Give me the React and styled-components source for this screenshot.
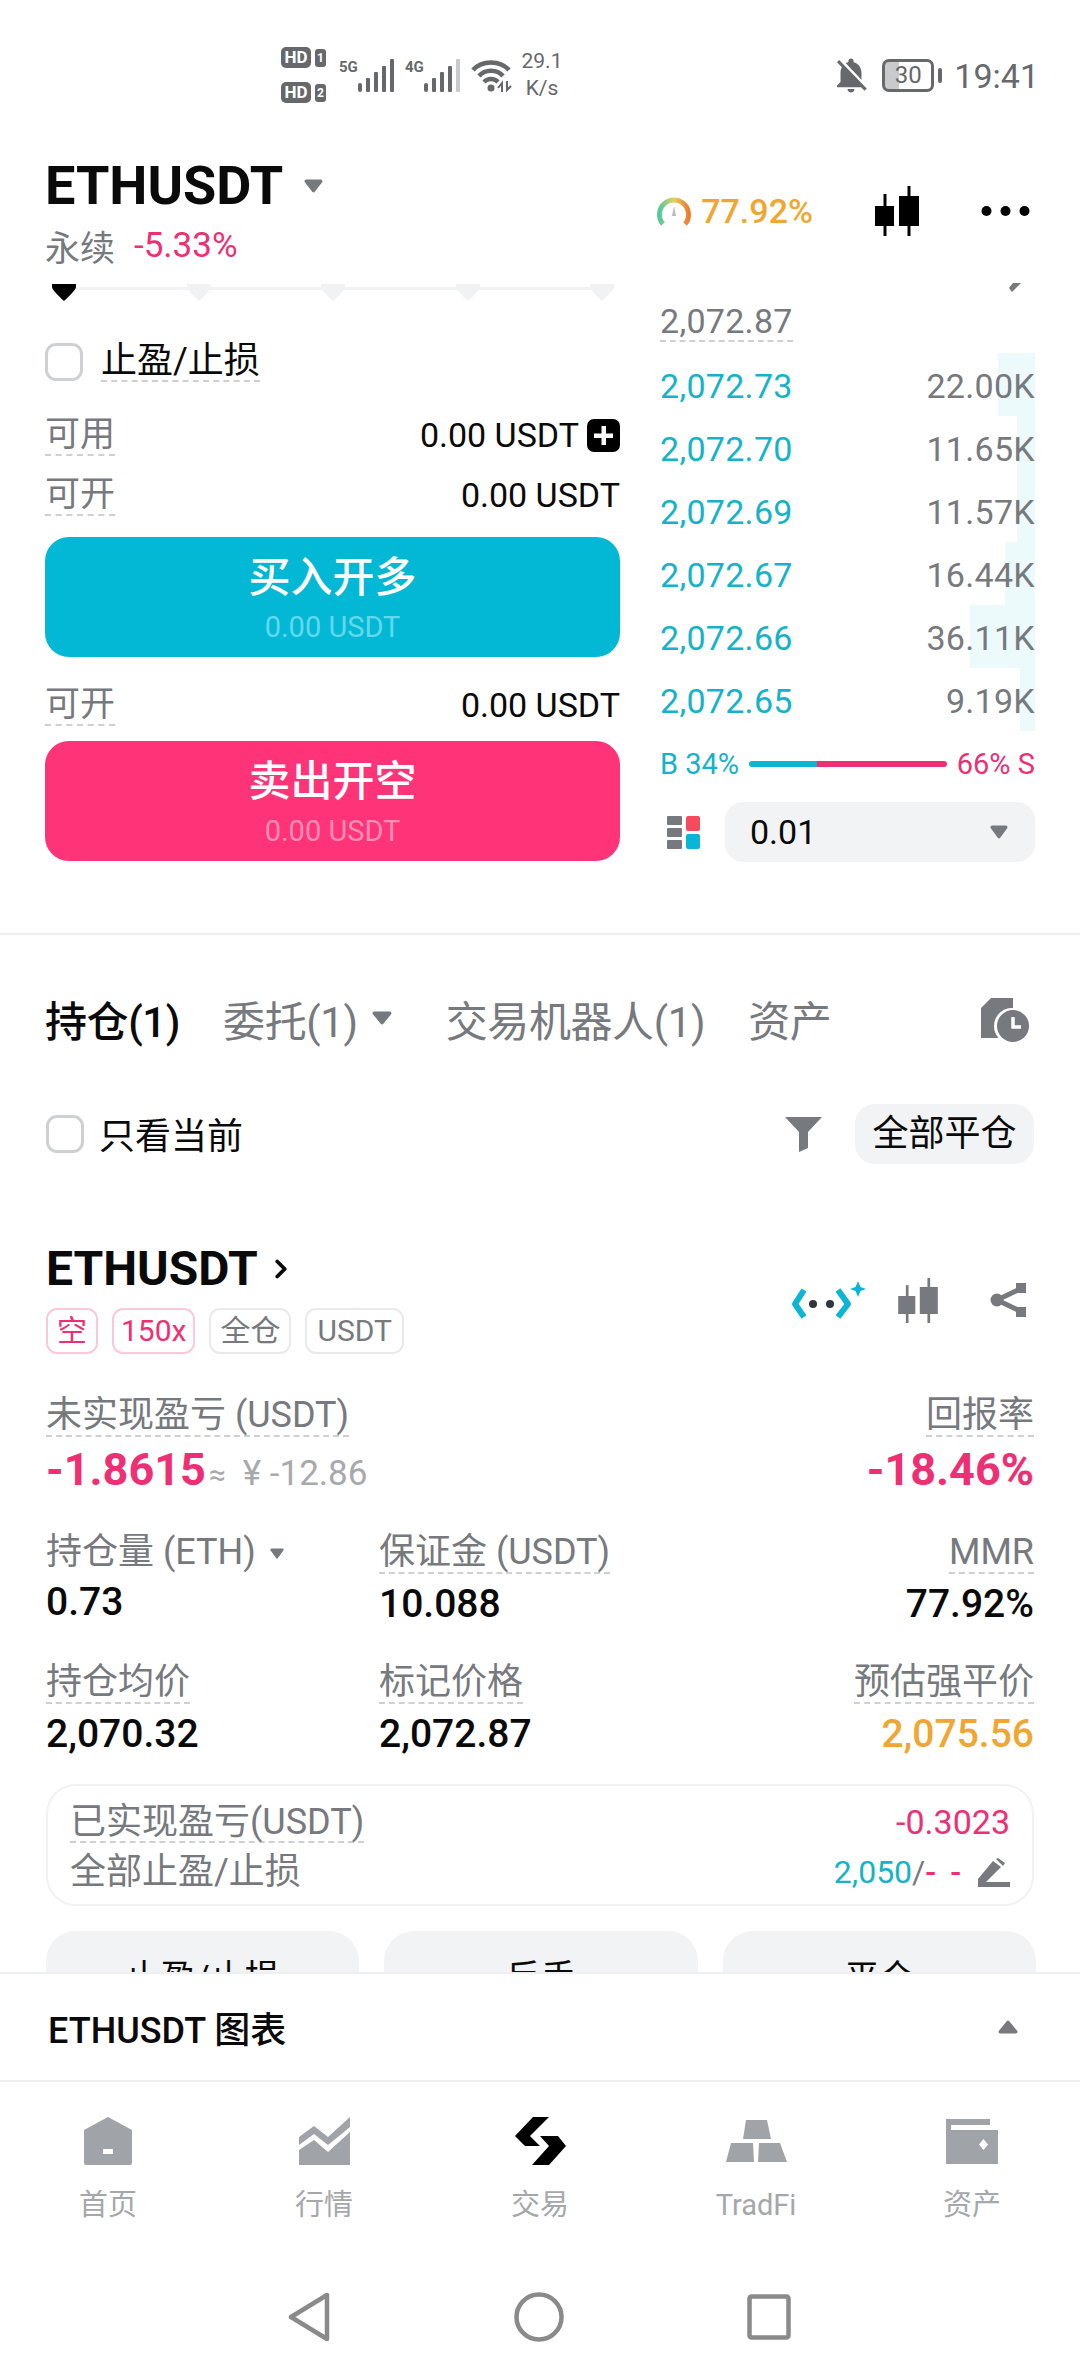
// Imports
import styled, {createGlobalStyle} from 'styled-components'
import {MdNotificationsOff} from 'react-icons/md'
import {LuChevronRight} from 'react-icons/lu'


// Styles
const pink = '#ee2f74'
const cyan = '#14b3c9'
const gray = '#76797e'

const GlobalStyle = createGlobalStyle`
    * { box-sizing:border-box; }
    html, body { margin:0; padding:0; background:#fff; }
    body { font-family:Roboto, "Noto Sans CJK SC", sans-serif; color:#0a0a0a; }
`
const Page = styled.div`
    width:1080px;
    height:2376px;
    display:flex;
    flex-direction:column;
    overflow:hidden;
    background:#fff;
`

// status bar
const StatusBar = styled.div`
    height:120px;
    flex:none;
    padding:30px 41px 0 281px;
    display:flex;
    align-items:center;
    color:#66686b;
`
const HdColumn = styled.div`
    width:46px;
    display:flex;
    flex-direction:column;
    gap:14px;
`
const HdLine = styled.div`
    display:flex;
    align-items:center;
    gap:4px;
`
const HdBadge = styled.span`
    width:30px;
    height:21px;
    border-radius:5px;
    background:#66686b;
    color:#fff;
    font-size:17px;
    font-weight:700;
    line-height:21px;
    text-align:center;
`
const SimBadge = styled.span`
    width:11px;
    height:18px;
    border-radius:3px;
    background:#66686b;
    color:#fff;
    font-size:12px;
    font-weight:700;
    line-height:18px;
    text-align:center;
`
const NetGroup = styled.div`
    display:flex;
    align-items:flex-start;
    margin-left:${({$ml}) => $ml}px;
`
const NetLabel = styled.span`
    font-size:15px;
    font-weight:700;
    line-height:16px;
    width:19px;
`
const Speed = styled.div`
    margin-left:7px;
    width:46px;
    font-size:21px;
    line-height:27px;
    text-align:center;
`
const StatusRight = styled.div`
    margin-left:auto;
    display:flex;
    align-items:center;
`
const Battery = styled.div`
    width:52px;
    height:33px;
    border:3px solid #66686b;
    border-radius:7px;
    position:relative;
    overflow:hidden;
    font-size:24px;
    line-height:27px;
    text-align:center;
    margin-left:10px;
    background:linear-gradient(90deg, #c9cacc 0, #c9cacc 30%, #fff 30%);
`
const BatteryNub = styled.span`
    width:4px;
    height:15px;
    border-radius:2px;
    background:#66686b;
    margin:0 12px 0 4px;
`
const Clock = styled.span`
    font-size:34px;
    line-height:40px;
    position:relative;
    top:1px;
`

// header
const Header = styled.div`
    height:163px;
    flex:none;
    padding:41px 50px 0 45px;
    display:flex;
    justify-content:space-between;
`
const TitleLine = styled.div`
    display:flex;
    align-items:center;
    height:50px;
`
const Symbol = styled.span`
    font-size:54px;
    font-weight:700;
    line-height:50px;
`
const SubLine = styled.div`
    display:flex;
    align-items:center;
    height:40px;
    margin-top:14px;
    gap:19px;
`
const Perp = styled.span`
    font-size:35px;
    color:${gray};
`
const Change = styled.span`
    font-size:35px;
    color:${pink};
`
const HeaderTools = styled.div`
    height:50px;
    margin-top:25px;
    display:flex;
    align-items:center;
`
const MmrText = styled.span`
    font-size:34px;
    font-weight:500;
    color:#f0a732;
    margin:0 62px 0 9px;
`

// scrolled area
const Main = styled.div`
    flex:1;
    min-height:0;
    overflow:hidden;
`
const TradePanel = styled.div`
    display:flex;
    gap:40px;
    padding:0 45px;
`
const LeftColumn = styled.div`
    width:575px;
    flex:none;
`
const RightColumn = styled.div`
    width:375px;
    flex:none;
`
const Slider = styled.div`
    position:relative;
    height:20px;
    padding:1px 6px 0 7px;
    display:flex;
    justify-content:space-between;
    align-items:flex-start;
`
const SliderTrack = styled.div`
    position:absolute;
    left:18px;
    right:18px;
    top:4px;
    height:3px;
    background:#f1f2f4;
`
const ThumbIcon = styled.svg`
    position:relative;
    display:block;
`
const TpRow = styled.div`
    margin-top:40px;
    height:38px;
    display:flex;
    align-items:center;
    gap:18px;
`
const CheckBox = styled.span`
    width:38px;
    height:38px;
    flex:none;
    border:3px solid #cfd0d2;
    border-radius:11px;
    background:#fff;
`
const DashLabel = styled.span`
    display:inline-block;
    font-size:${({$size}) => $size || 35}px;
    line-height:${({$lh}) => $lh || 38}px;
    color:${({$dark}) => $dark ? '#0a0a0a' : gray};
    border-bottom:2px dashed #cfd0d2;
    white-space:nowrap;
`
const InfoRow = styled.div`
    display:flex;
    justify-content:space-between;
    align-items:flex-start;
    margin-top:${({$mt}) => $mt}px;
`
const InfoValue = styled.span`
    display:flex;
    align-items:center;
    font-size:34px;
    line-height:38px;
    gap:8px;
`
const PlusBox = styled.span`
    width:33px;
    height:33px;
    border-radius:7px;
    background:#000;
    display:flex;
    align-items:center;
    justify-content:center;
`
const ActionButton = styled.div`
    height:120px;
    margin-top:${({$mt}) => $mt}px;
    padding-top:16px;
    border-radius:24px;
    background:${({$bg}) => $bg};
    color:#fff;
    text-align:center;
`
const ActionTitle = styled.div`
    font-size:42px;
    font-weight:500;
    line-height:50px;
`
const ActionSub = styled.div`
    margin-top:4px;
    font-size:29px;
    line-height:40px;
    color:${({$color}) => $color};
`
const TopScrap = styled.div`
    height:19px;
    display:flex;
    justify-content:flex-end;
    padding-right:14px;
`
const MarkPrice = styled.span`
    display:inline-block;
    font-size:34px;
    line-height:38px;
    color:${gray};
    letter-spacing:0.3px;
    border-bottom:2px dashed #cfd0d2;
`
const Book = styled.div`
    margin-top:11px;
`
const BookRow = styled.div`
    position:relative;
    height:63px;
    padding-top:3px;
    display:flex;
    align-items:center;
    justify-content:space-between;
    font-size:34px;
    letter-spacing:0.3px;
`
const DepthBar = styled.span`
    position:absolute;
    top:0;
    right:0;
    bottom:0;
    width:${({$w}) => $w}px;
    background:#edfafc;
`
const BookPrice = styled.span`
    position:relative;
    color:${cyan};
`
const BookAmount = styled.span`
    position:relative;
    color:${gray};
`
const RatioRow = styled.div`
    margin-top:17px;
    height:32px;
    display:flex;
    align-items:center;
    justify-content:space-between;
    font-size:29px;
`
const RatioText = styled.span`
    color:${({$color}) => $color};
`
const RatioBar = styled.div`
    width:198px;
    height:6px;
    border-radius:3px;
    display:flex;
    overflow:hidden;
`
const RatioPart = styled.span`
    width:${({$w}) => $w}px;
    background:${({$bg}) => $bg};
`
const StepRow = styled.div`
    margin-top:22px;
    display:flex;
    align-items:center;
    padding-left:7px;
`
const StepSelect = styled.div`
    margin-left:25px;
    width:310px;
    height:60px;
    padding:0 27px 0 25px;
    border-radius:18px;
    background:#f2f3f5;
    display:flex;
    align-items:center;
    justify-content:space-between;
    font-size:34px;
`
const Divider = styled.div`
    margin-top:71px;
    height:2px;
    background:#eeeff1;
`
const Tabs = styled.div`
    margin-top:53px;
    height:60px;
    padding:0 50px 0 45px;
    display:flex;
    align-items:center;
    gap:43px;
`
const Tab = styled.span`
    display:flex;
    align-items:center;
    gap:14px;
    font-size:42px;
    letter-spacing:-0.4px;
    font-weight:${({$active}) => $active ? 500 : 400};
    color:${({$active}) => $active ? '#0a0a0a' : gray};
    margin-right:${({$mr}) => $mr || 0}px;
`
const TabEnd = styled.span`
    margin-left:auto;
    display:flex;
    position:relative;
    top:2px;
`
const FilterRow = styled.div`
    margin-top:56px;
    height:60px;
    padding:0 46px;
    display:flex;
    align-items:center;
`
const FilterLabel = styled.span`
    margin:0 0 3px 15px;
    font-size:36px;
`
const FilterEnd = styled.div`
    margin-left:auto;
    display:flex;
    align-items:center;
    gap:33px;
`
const CloseAll = styled.span`
    width:179px;
    height:60px;
    border-radius:20px;
    background:#f2f3f5;
    font-size:36px;
    line-height:60px;
    text-align:center;
`
const Position = styled.div`
    margin-top:82px;
    padding:0 46px;
`
const PositionHead = styled.div`
    display:flex;
    align-items:center;
    justify-content:space-between;
`
const PositionName = styled.div`
    display:flex;
    align-items:center;
    gap:8px;
    font-size:48px;
    font-weight:700;
    line-height:46px;
`
const Tags = styled.div`
    margin-top:16px;
    display:flex;
    gap:14px;
`
const Tag = styled.span`
    height:46px;
    padding:0 ${({$pad}) => $pad}px;
    border:2px solid ${({$pink}) => $pink ? '#fbc9da' : '#e9eaec'};
    border-radius:11px;
    font-size:30px;
    line-height:42px;
    color:${({$pink}) => $pink ? pink : gray};
`
const HeadIcons = styled.div`
    display:flex;
    align-items:center;
    margin-right:8px;
`
const PnlRow = styled.div`
    margin-top:41px;
    display:flex;
    justify-content:space-between;
`
const Cell = styled.div`
    display:flex;
    flex-direction:column;
    align-items:${({$right}) => $right ? 'flex-end' : 'flex-start'};
`
const LabelLine = styled.span`
    display:flex;
    align-items:flex-start;
    gap:14px;
`
const PnlValue = styled.div`
    margin-top:8px;
    display:flex;
    align-items:baseline;
    font-size:45px;
    font-weight:700;
    line-height:50px;
    color:${pink};
`
const Approx = styled.span`
    margin-left:3px;
    font-size:30px;
    font-weight:400;
    color:#a7a9ac;
`
const Fiat = styled.span`
    margin-left:17px;
    font-size:35px;
    font-weight:400;
    color:#a7a9ac;
`
const MetricGrid = styled.div`
    margin-top:${({$mt}) => $mt}px;
    display:grid;
    grid-template-columns:333px 1fr auto;
`
const MetricValue = styled.div`
    margin-top:7px;
    font-size:39px;
    font-weight:500;
    line-height:46px;
    color:${({$color}) => $color || '#0a0a0a'};
`
const Realized = styled.div`
    margin-top:27px;
    height:122px;
    padding:17px 22px 0 22px;
    border:2px solid #f1f2f4;
    border-radius:30px;
`
const RealizedRow = styled.div`
    display:flex;
    align-items:flex-start;
    justify-content:space-between;
    margin-top:${({$mt}) => $mt || 0}px;
`
const PlainLabel = styled.span`
    font-size:${({$size}) => $size || 36}px;
    line-height:${({$lh}) => $lh || 38}px;
    color:${gray};
`
const SmallValue = styled.span`
    display:flex;
    align-items:center;
    font-size:${({$size}) => $size || 34}px;
    line-height:38px;
    color:${({$color}) => $color || pink};
`
const Slash = styled.span`
    color:${gray};
`
const Dashes = styled.span`
    color:${pink};
    margin-right:14px;
    font-weight:500;
    letter-spacing:3px;
`
const CaretSlot = styled.span`
    margin-top:12px;
`
const ActionGrid = styled.div`
    margin-top:25px;
    display:grid;
    grid-template-columns:313px 314px 313px;
    gap:25px;
`
const GhostButton = styled.div`
    height:96px;
    border-radius:30px;
    background:#f2f3f5;
    font-size:35px;
    line-height:96px;
    text-align:center;
`

// bottom
const ChartBar = styled.div`
    height:108px;
    flex:none;
    border-top:2px solid #eeeff1;
    padding:0 62px 0 48px;
    display:flex;
    align-items:center;
    justify-content:space-between;
    font-size:36px;
    font-weight:500;
`
const BottomNav = styled.div`
    height:172px;
    flex:none;
    border-top:2px solid #eeeff1;
    display:grid;
    grid-template-columns:repeat(5, 216px);
`
const NavItem = styled.div`
    padding-top:35px;
    display:flex;
    flex-direction:column;
    align-items:center;
`
const NavIcon = styled.div`
    height:48px;
    display:flex;
    align-items:center;
    justify-content:center;
`
const NavLabel = styled.span`
    margin-top:22px;
    font-size:29px;
    line-height:36px;
    color:#a5a7aa;
`
const SystemNav = styled.div`
    height:124px;
    flex:none;
    padding:5px 289px 0 288px;
    display:flex;
    align-items:center;
    justify-content:space-between;
`
const TitleGap = styled.span`
    width:21px;
`
const Gap = styled.span`
    width:${({$w}) => $w}px;
`


// Icons
const Caret = ({w = 18, h = 13, up, color = gray}) => (
    <svg width={w} height={h} viewBox='0 0 18 13' preserveAspectRatio='none'>
        <path d={up ? 'M9 2 L16 11 H2 Z' : 'M2 2 H16 L9 11 Z'} fill={color} stroke={color} strokeWidth='3' strokeLinejoin='round' />
    </svg>
)

const Thumb = ({color}) => (
    <ThumbIcon width='24' height='17' viewBox='0 0 24 17'>
        <path d='M0 0 H24 V3 C24 6 14 15 12 17 C10 15 0 6 0 3 Z' fill={color} />
    </ThumbIcon>
)

const SignalBars = ({last = '#66686b'}) => (
    <svg width='36' height='33' viewBox='0 0 36 33'>
        <rect x='0' y='24' width='4' height='9' rx='2' fill='#66686b' />
        <rect x='8' y='19' width='4' height='14' rx='1' fill='#66686b' />
        <rect x='16' y='13' width='4' height='20' rx='1' fill='#66686b' />
        <rect x='24' y='7' width='4' height='26' rx='1' fill='#66686b' />
        <rect x='32' y='0' width='4' height='33' rx='1' fill={last} />
    </svg>
)

const Wifi = () => (
    <svg width='41' height='33' viewBox='0 0 41 33' fill='none' stroke='#66686b' strokeWidth='4.5'>
        <path d='M2 11 C11 1 29 1 38 11' />
        <path d='M8 17 C14 10 26 10 32 17' />
        <path d='M13 23 C17 19 23 19 27 23' />
        <circle cx='20' cy='29' r='3.5' fill='#66686b' stroke='none' />
        <path d='M31 33 V24 L27 29 M36 22 V31 L40 27' strokeWidth='2' />
    </svg>
)

const Gauge = () => (
    <svg width='36' height='30' viewBox='0 0 36 30' fill='none'>
        <defs>
            <linearGradient id='gaugeFill' x1='0' x2='1' y1='0' y2='0'>
                <stop offset='0' stopColor='#54c9a0' />
                <stop offset='0.5' stopColor='#e6d25a' />
                <stop offset='1' stopColor='#ef7d2e' />
            </linearGradient>
        </defs>
        <path d='M7 28 A14.5 14.5 0 1 1 29 28' stroke='url(#gaugeFill)' strokeWidth='5' />
        <path d='M18 10 L20 20 H16 Z' fill='#b9bbbe' />
    </svg>
)

const Candles = ({w = 44, h = 50, color = '#000'}) => (
    <svg width={w} height={h} viewBox='0 0 44 50' fill={color}>
        <rect x='0' y='20' width='19' height='20' />
        <rect x='8.5' y='8' width='3' height='42' />
        <rect x='24' y='10' width='20' height='30' />
        <rect x='32.5' y='0' width='3' height='50' />
    </svg>
)

const Dots = () => (
    <svg width='49' height='12' viewBox='0 0 49 12' fill='#000'>
        <circle cx='5.5' cy='6' r='5' />
        <circle cx='24.5' cy='6' r='5' />
        <circle cx='43.5' cy='6' r='5' />
    </svg>
)

const Plus = () => (
    <svg width='21' height='21' viewBox='0 0 21 21' fill='#fff'>
        <rect x='8.5' y='1' width='4.5' height='19' />
        <rect x='1' y='8.5' width='19' height='4.5' />
    </svg>
)

const BookLayout = () => (
    <svg width='33' height='33' viewBox='0 0 33 33'>
        <rect x='0' y='0' width='15' height='9' rx='1' fill={gray} />
        <rect x='0' y='12' width='15' height='9' rx='1' fill={gray} />
        <rect x='0' y='24' width='15' height='9' rx='1' fill={gray} />
        <rect x='19' y='0' width='14' height='15' rx='2' fill='#f64b5c' />
        <rect x='19' y='18' width='14' height='15' rx='2' fill='#0cb5d6' />
    </svg>
)

const HistoryIcon = () => (
    <svg width='49' height='44' viewBox='0 0 49 44'>
        <path d='M10 0 H32 V14 H18 V34 H0 V10 Z' fill={gray} />
        <rect x='0' y='14' width='22' height='26' fill={gray} />
        <circle cx='31' cy='28' r='18' fill='#fff' />
        <circle cx='32' cy='28' r='16' fill={gray} />
        <path d='M32 19 V29 H40' fill='none' stroke='#fff' strokeWidth='3.5' />
    </svg>
)

const Funnel = () => (
    <svg width='37' height='35' viewBox='0 0 37 35' fill={gray}>
        <path d='M0 0 H37 L23 15 V31 L14 35 V15 Z' />
    </svg>
)

const BotIcon = () => (
    <svg width='76' height='38' viewBox='0 0 76 38' fill='none'>
        <path d='M14 9 L5 23 L14 36' stroke='#0cb5d6' strokeWidth='6' strokeLinejoin='round' />
        <path d='M48 9 L58 23 L48 36' stroke='#0cb5d6' strokeWidth='6' strokeLinejoin='round' />
        <circle cx='23' cy='23' r='4' fill='#33373b' />
        <circle cx='40' cy='23' r='4' fill='#33373b' />
        <path d='M68 0 L70.5 6 L76 8 L70.5 10 L68 16 L65.5 10 L60 8 L65.5 6 Z' fill='#0cb5d6' />
    </svg>
)

const ShareIcon = () => (
    <svg width='36' height='34' viewBox='0 0 36 34' fill='none' stroke={gray} strokeWidth='5'>
        <path d='M32 5 L7 17 L32 29' />
        <circle cx='7' cy='17' r='6.5' fill={gray} stroke='none' />
        <rect x='26' y='0' width='10' height='10' fill={gray} stroke='none' />
        <rect x='26' y='24' width='10' height='10' fill={gray} stroke='none' />
    </svg>
)

const PenIcon = () => (
    <svg width='32' height='29' viewBox='0 0 32 29' fill={gray}>
        <path d='M0 21 L15 3 L23 9 L8 24 H0 Z' />
        <path d='M18 1 L20 0 L27 5 L25 8 Z' />
        <rect x='0' y='24' width='32' height='5' />
    </svg>
)

const HomeIcon = () => (
    <svg width='48' height='48' viewBox='0 0 48 48' fill='#a0a3a8'>
        <path fillRule='evenodd' d='M24 0 L48 13 V46 Q48 48 46 48 H2 Q0 48 0 46 V13 Z M19 32 V37 H29 V32 Z' />
    </svg>
)

const MarketIcon = () => (
    <svg width='51' height='48' viewBox='0 0 51 48' fill='#a0a3a8'>
        <path d='M0 20 L15 9 L29 20 L51 0 V10 L29 28 L15 17 L0 28 Z' />
        <path d='M0 48 V33 L15 23 L29 35 L51 15 V48 Z' />
    </svg>
)

const SwapIcon = () => (
    <svg width='51' height='48' viewBox='0 0 51 48' fill='#000'>
        <path d='M34 0 H18 L0 19 L10 29 H25 L15 19 Z' />
        <path d='M43 19 L51 29 L34 48 H17 L34 29 L25 19 Z' />
    </svg>
)

const GoldIcon = () => (
    <svg width='61' height='42' viewBox='0 0 61 42' fill='#a0a3a8'>
        <path d='M20 0 H41 L45 19 H17 Z' />
        <path d='M5 23 H27 L28 42 H0 Z' />
        <path d='M33 23 H54 L61 42 H32 Z' />
    </svg>
)

const WalletIcon = () => (
    <svg width='52' height='45' viewBox='0 0 52 45' fill='#a0a3a8'>
        <path fillRule='evenodd' d='M0 0 H44 V6 H5 V11 H52 V45 H0 Z M37.5 20 L33 25.5 L37.5 31 L42 25.5 Z' />
    </svg>
)


// Data
const bookRows = [
    {price: '2,072.73', amount: '22.00K', depth: 37},
    {price: '2,072.70', amount: '11.65K', depth: 18},
    {price: '2,072.69', amount: '11.57K', depth: 18},
    {price: '2,072.67', amount: '16.44K', depth: 30},
    {price: '2,072.66', amount: '36.11K', depth: 65},
    {price: '2,072.65', amount: '9.19K', depth: 15},
]

const navItems = [
    {label: '首页', icon: <HomeIcon />},
    {label: '行情', icon: <MarketIcon />},
    {label: '交易', icon: <SwapIcon />},
    {label: 'TradFi', icon: <GoldIcon />},
    {label: '资产', icon: <WalletIcon />},
]


// Main Function
const App = () => {
    return (
        <Page>
            <GlobalStyle />

            <StatusBar>
                <HdColumn>
                    <HdLine><HdBadge>HD</HdBadge><SimBadge>1</SimBadge></HdLine>
                    <HdLine><HdBadge>HD</HdBadge><SimBadge>2</SimBadge></HdLine>
                </HdColumn>
                <NetGroup $ml={12}><NetLabel>5G</NetLabel><SignalBars /></NetGroup>
                <NetGroup $ml={11}><NetLabel>4G</NetLabel><SignalBars last='#c9cacc' /></NetGroup>
                <NetGroup $ml={11}><Wifi /></NetGroup>
                <Speed>29.1<br />K/s</Speed>
                <StatusRight>
                    <MdNotificationsOff size={42} />
                    <Battery>30</Battery>
                    <BatteryNub />
                    <Clock>19:41</Clock>
                </StatusRight>
            </StatusBar>

            <Header>
                <div>
                    <TitleLine>
                        <Symbol>ETHUSDT</Symbol>
                        <TitleGap />
                        <Caret w={19} h={14} />
                    </TitleLine>
                    <SubLine>
                        <Perp>永续</Perp>
                        <Change>-5.33%</Change>
                    </SubLine>
                </div>
                <HeaderTools>
                    <Gauge />
                    <MmrText>77.92%</MmrText>
                    <Candles />
                    <Gap $w={62} />
                    <Dots />
                </HeaderTools>
            </Header>

            <Main>
                <TradePanel>
                    <LeftColumn>
                        <Slider>
                            <SliderTrack />
                            <Thumb color='#000' />
                            <Thumb color='#f1f2f4' />
                            <Thumb color='#f1f2f4' />
                            <Thumb color='#f1f2f4' />
                            <Thumb color='#f1f2f4' />
                        </Slider>
                        <TpRow>
                            <CheckBox />
                            <DashLabel $size={36} $dark>止盈/止损</DashLabel>
                        </TpRow>
                        <InfoRow $mt={35}>
                            <DashLabel>可用</DashLabel>
                            <InfoValue>0.00 USDT<PlusBox><Plus /></PlusBox></InfoValue>
                        </InfoRow>
                        <InfoRow $mt={20}>
                            <DashLabel>可开</DashLabel>
                            <InfoValue>0.00 USDT</InfoValue>
                        </InfoRow>
                        <ActionButton $bg='#03b8d5' $mt={21}>
                            <ActionTitle>买入开多</ActionTitle>
                            <ActionSub $color='#62d8ec'>0.00 USDT</ActionSub>
                        </ActionButton>
                        <InfoRow $mt={29}>
                            <DashLabel>可开</DashLabel>
                            <InfoValue>0.00 USDT</InfoValue>
                        </InfoRow>
                        <ActionButton $bg='#ff3377' $mt={15}>
                            <ActionTitle>卖出开空</ActionTitle>
                            <ActionSub $color='#ff8fb4'>0.00 USDT</ActionSub>
                        </ActionButton>
                    </LeftColumn>

                    <RightColumn>
                        <TopScrap>
                            <svg width='12' height='9' viewBox='0 0 12 9'><path d='M4 0 H12 L3 9 L0 5 Z' fill={gray} /></svg>
                        </TopScrap>
                        <MarkPrice>2,072.87</MarkPrice>
                        <Book>
                            {bookRows.map(row => (
                                <BookRow key={row.price}>
                                    <DepthBar $w={row.depth} />
                                    <BookPrice>{row.price}</BookPrice>
                                    <BookAmount>{row.amount}</BookAmount>
                                </BookRow>
                            ))}
                        </Book>
                        <RatioRow>
                            <RatioText $color={cyan}>B 34%</RatioText>
                            <RatioBar>
                                <RatioPart $w={68} $bg='#0cb5d0' />
                                <RatioPart $w={130} $bg={pink} />
                            </RatioBar>
                            <RatioText $color={pink}>66% S</RatioText>
                        </RatioRow>
                        <StepRow>
                            <BookLayout />
                            <StepSelect>
                                0.01
                                <Caret w={18} h={14} />
                            </StepSelect>
                        </StepRow>
                    </RightColumn>
                </TradePanel>

                <Divider />

                <Tabs>
                    <Tab $active>持仓(1)</Tab>
                    <Tab $mr={11}>委托(1)<Caret w={20} h={14} /></Tab>
                    <Tab>交易机器人(1)</Tab>
                    <Tab>资产</Tab>
                    <TabEnd><HistoryIcon /></TabEnd>
                </Tabs>

                <FilterRow>
                    <CheckBox />
                    <FilterLabel>只看当前</FilterLabel>
                    <FilterEnd>
                        <Funnel />
                        <CloseAll>全部平仓</CloseAll>
                    </FilterEnd>
                </FilterRow>

                <Position>
                    <PositionHead>
                        <div>
                            <PositionName>ETHUSDT<LuChevronRight size={30} strokeWidth={3} /></PositionName>
                            <Tags>
                                <Tag $pink $pad={9}>空</Tag>
                                <Tag $pink $pad={7}>150x</Tag>
                                <Tag $pad={9}>全仓</Tag>
                                <Tag $pad={10}>USDT</Tag>
                            </Tags>
                        </div>
                        <HeadIcons>
                            <BotIcon />
                            <Gap $w={31} />
                            <Candles w={42} h={45} color={gray} />
                            <Gap $w={51} />
                            <ShareIcon />
                        </HeadIcons>
                    </PositionHead>

                    <PnlRow>
                        <Cell>
                            <DashLabel $size={36} $lh={40}>未实现盈亏 (USDT)</DashLabel>
                            <PnlValue>
                                -1.8615
                                <Approx>≈</Approx>
                                <Fiat>¥ -12.86</Fiat>
                            </PnlValue>
                        </Cell>
                        <Cell $right>
                            <DashLabel $size={36} $lh={40}>回报率</DashLabel>
                            <PnlValue>-18.46%</PnlValue>
                        </Cell>
                    </PnlRow>

                    <MetricGrid $mt={32}>
                        <Cell>
                            <LabelLine>
                                <PlainLabel $lh={40}>持仓量 (ETH)</PlainLabel>
                                <CaretSlot><Caret w={14} h={11} /></CaretSlot>
                            </LabelLine>
                            <MetricValue>0.73</MetricValue>
                        </Cell>
                        <Cell>
                            <DashLabel $size={36} $lh={40}>保证金 (USDT)</DashLabel>
                            <MetricValue>10.088</MetricValue>
                        </Cell>
                        <Cell $right>
                            <DashLabel $size={36} $lh={40}>MMR</DashLabel>
                            <MetricValue>77.92%</MetricValue>
                        </Cell>
                    </MetricGrid>

                    <MetricGrid $mt={35}>
                        <Cell>
                            <DashLabel $size={36} $lh={40}>持仓均价</DashLabel>
                            <MetricValue>2,070.32</MetricValue>
                        </Cell>
                        <Cell>
                            <DashLabel $size={36} $lh={40}>标记价格</DashLabel>
                            <MetricValue>2,072.87</MetricValue>
                        </Cell>
                        <Cell $right>
                            <DashLabel $size={36} $lh={40}>预估强平价</DashLabel>
                            <MetricValue $color='#f0a732'>2,075.56</MetricValue>
                        </Cell>
                    </MetricGrid>

                    <Realized>
                        <RealizedRow>
                            <DashLabel $size={36}>已实现盈亏(USDT)</DashLabel>
                            <SmallValue>-0.3023</SmallValue>
                        </RealizedRow>
                        <RealizedRow $mt={10}>
                            <PlainLabel>全部止盈/止损</PlainLabel>
                            <SmallValue $color={cyan} $size={32}>
                                2,050<Slash>/</Slash><Dashes>- -</Dashes>
                                <PenIcon />
                            </SmallValue>
                        </RealizedRow>
                    </Realized>

                    <ActionGrid>
                        <GhostButton>止盈/止损</GhostButton>
                        <GhostButton>反手</GhostButton>
                        <GhostButton>平仓</GhostButton>
                    </ActionGrid>
                </Position>
            </Main>

            <ChartBar>
                ETHUSDT 图表
                <Caret up w={20} h={14} />
            </ChartBar>

            <BottomNav>
                {navItems.map(item => (
                    <NavItem key={item.label}>
                        <NavIcon>{item.icon}</NavIcon>
                        <NavLabel>{item.label}</NavLabel>
                    </NavItem>
                ))}
            </BottomNav>

            <SystemNav>
                <svg width='42' height='50' viewBox='0 0 42 50' fill='none' stroke='#8a8a8a' strokeWidth='4.5' strokeLinejoin='round'>
                    <path d='M39 3 V47 L3 25 Z' />
                </svg>
                <svg width='50' height='50' viewBox='0 0 50 50' fill='none' stroke='#8a8a8a' strokeWidth='4.5'>
                    <circle cx='25' cy='25' r='22.5' />
                </svg>
                <svg width='44' height='46' viewBox='0 0 44 46' fill='none' stroke='#8a8a8a' strokeWidth='4.5' strokeLinejoin='round'>
                    <rect x='2.5' y='2.5' width='39' height='41' rx='2' />
                </svg>
            </SystemNav>
        </Page>
    )
}


// Export
export default App;
